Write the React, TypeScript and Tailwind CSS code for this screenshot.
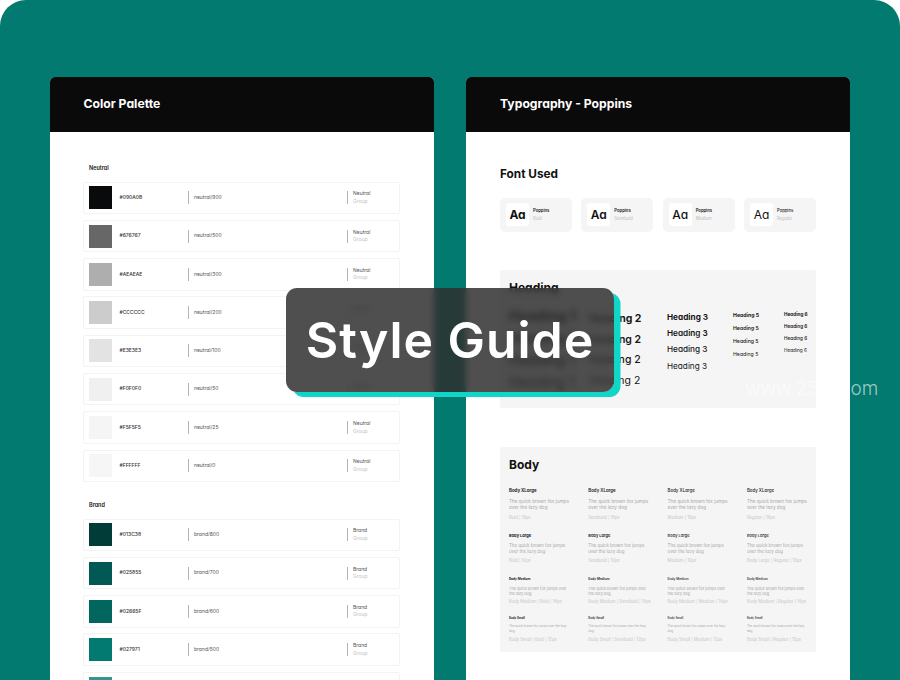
const neutral = [
  { hex: "#090A0B", name: "neutral/900", color: "#090a0b" },
  { hex: "#676767", name: "neutral/500", color: "#676767" },
  { hex: "#AEAEAE", name: "neutral/300", color: "#aeaeae" },
  { hex: "#CCCCCC", name: "neutral/200", color: "#cccccc" },
  { hex: "#E3E3E3", name: "neutral/100", color: "#e3e3e3" },
  { hex: "#F0F0F0", name: "neutral/50", color: "#f0f0f0" },
  { hex: "#F5F5F5", name: "neutral/25", color: "#f5f5f5" },
  { hex: "#FFFFFF", name: "neutral/0", color: "#f6f6f6" },
];

const brand = [
  { hex: "#013C38", name: "brand/800", color: "#013c38" },
  { hex: "#025855", name: "brand/700", color: "#025855" },
  { hex: "#02665F", name: "brand/600", color: "#02665f" },
  { hex: "#027971", name: "brand/500", color: "#027971" },
  { hex: "#359490", name: "brand/400", color: "#359490" },
];

const fonts = [
  { weight: "Bold", cls: "font-bold" },
  { weight: "Semibold", cls: "font-semibold" },
  { weight: "Medium", cls: "font-medium" },
  { weight: "Regular", cls: "font-normal" },
];

const weights = ["font-bold", "font-semibold", "font-medium", "font-normal"];

const bodyColumns = [
  { cls: "font-bold", metas: ["Bold | 18px", "Bold | 16px", "Body Medium | Bold | 14px", "Body Small | Bold | 12px"] },
  { cls: "font-semibold", metas: ["Semibold | 18px", "Semibold | 16px", "Body Medium | Semibold | 14px", "Body Small | Semibold | 12px"] },
  { cls: "font-medium", metas: ["Medium | 18px", "Medium | 16px", "Body Medium | Medium | 14px", "Body Small | Medium | 12px"] },
  { cls: "font-normal", metas: ["Regular | 18px", "Body Large | Regular | 16px", "Body Medium | Regular | 14px", "Body Small | Regular | 12px"] },
];

const Row = ({ hex, name, color, group }: { hex: string; name: string; color: string; group: string }) => (
  <div className="flex h-[32.5px] w-[317px] shrink-0 items-center rounded-[2px] border border-[#f3f3f3] pl-[4.5px] text-[5px] text-[#333333]">
    <div className="h-[23px] w-[23px] shrink-0" style={{ backgroundColor: color }} />
    <div className="w-[76px] shrink-0 pl-[8px] font-medium">{hex}</div>
    <div className="flex h-[13px] w-[159px] shrink-0 items-center border-l border-[#b5b5b5] pl-[5.5px] text-[#555555]">{name}</div>
    <div className="flex h-[13px] flex-col justify-center border-l border-[#b5b5b5] pl-[5.5px] leading-[7.5px]">
      <span className="text-[#555555]">{group}</span>
      <span className="text-[#c4c4c4]">Group</span>
    </div>
  </div>
);

const HeadingColumn = ({ label, size, width, top, gap }: { label: string; size: string; width: string; top: string; gap: string }) => (
  <div className={`flex shrink-0 flex-col ${width} ${top} ${gap}`}>
    {weights.map((w) => (
      <div key={w} className={`${size} ${w} leading-none text-[#151515]`}>
        {label}
      </div>
    ))}
  </div>
);

const BodyBlock = ({ title, titleCls, paraCls, meta, metaCls, weight, mb }: { title: string; titleCls: string; paraCls: string; meta: string; metaCls: string; weight: string; mb: string }) => (
  <div className={mb}>
    <div className={`${titleCls} ${weight} leading-none text-[#222222]`}>{title}</div>
    <div className={`${paraCls} text-[#a8a8a8]`}>The quick brown fox jumps over the lazy dog</div>
    <div className={`${metaCls} whitespace-nowrap text-[4.2px] leading-none text-[#c6c6c6]`}>{meta}</div>
  </div>
);

export default function App() {
  return (
    <div className="h-[680px] w-[900px] overflow-hidden bg-white font-['Inter',sans-serif] [font-feature-settings:'cv11']">
      <div className="relative h-[680px] rounded-t-[26px] bg-[#037a70] pl-[50px] pt-[77px]">
        <div className="flex gap-[32px]">
          <section className="h-[603px] w-[384px] shrink-0 overflow-hidden rounded-t-[5px] bg-white">
            <div className="flex h-[55px] items-center bg-[#0a0a0a] pl-[33.5px] text-[12.2px] font-bold text-white">Color Palette</div>
            <div className="flex flex-col pl-[33px] pt-[33px]">
              <div className="mb-[9.5px] pl-[6px] text-[5.5px] leading-[7px] font-semibold text-[#151515]">Neutral</div>
              <div className="flex flex-col gap-[5.8px]">
                {neutral.map((r) => (
                  <Row key={r.hex} {...r} group="Neutral" />
                ))}
              </div>
              <div className="mb-[9.5px] mt-[20px] pl-[6px] text-[5.5px] leading-[7px] font-semibold text-[#151515]">Brand</div>
              <div className="flex flex-col gap-[5.8px]">
                {brand.map((r) => (
                  <Row key={r.hex} {...r} group="Brand" />
                ))}
              </div>
            </div>
          </section>

          <section className="h-[603px] w-[384px] shrink-0 overflow-hidden rounded-t-[5px] bg-white">
            <div className="flex h-[55px] items-center bg-[#0a0a0a] pl-[34px] text-[12.2px] font-bold text-white">Typography - Poppins</div>
            <div className="px-[34px] pt-[35px]">
              <div className="text-[11.8px] leading-[15px] font-bold text-[#111111]">Font Used</div>
              <div className="mt-[15.5px] flex justify-between">
                {fonts.map((f) => (
                  <div key={f.weight} className="flex h-[34px] w-[72px] items-center gap-[4px] rounded-[5px] bg-[#f5f5f5] pl-[6px]">
                    <div className={`flex h-[23px] w-[23px] items-center justify-center rounded-[3px] bg-white text-[12px] text-[#111111] ${f.cls}`}>Aa</div>
                    <div className="flex flex-col text-[4.2px] leading-[8px]">
                      <span className={`text-[#1a1a1a] ${f.cls === "font-normal" ? "font-medium" : "font-semibold"}`}>Poppins</span>
                      <span className="text-[#bbbbbb]">{f.weight}</span>
                    </div>
                  </div>
                ))}
              </div>

              <div className="mt-[38.5px] h-[138px] rounded-[2px] bg-[#f5f5f5] pl-[9px] pt-[11px]">
                <div className="text-[12px] leading-[13px] font-bold text-[#111111]">Heading</div>
                <div className="flex">
                  <HeadingColumn label="Heading 1" size="text-[14px]" width="w-[80px]" top="mt-[15px]" gap="gap-[8px]" />
                  <HeadingColumn label="Heading 2" size="text-[10.5px]" width="w-[78px]" top="mt-[20px]" gap="gap-[10px]" />
                  <HeadingColumn label="Heading 3" size="text-[8.2px]" width="w-[66px]" top="mt-[19px]" gap="gap-[8px]" />
                  <HeadingColumn label="Heading 5" size="text-[5.2px]" width="w-[51px]" top="mt-[19px]" gap="gap-[7.9px]" />
                  <HeadingColumn label="Heading 6" size="text-[4.7px]" width="w-[30px]" top="mt-[18px]" gap="gap-[7.2px]" />
                </div>
              </div>

              <div className="mt-[39px] h-[205px] rounded-[2px] bg-[#f5f5f5] pl-[9px] pt-[10px]">
                <div className="text-[12px] leading-[16px] font-bold text-[#111111]">Body</div>
                <div className="mt-[16px] flex">
                  {bodyColumns.map((c) => {
                    const weight = c.cls === "font-normal" ? "font-medium" : c.cls;
                    return (
                      <div key={c.cls} className="w-[79.3px] shrink-0">
                        <BodyBlock title="Body XLarge" titleCls="text-[4.4px]" paraCls="mt-[4.5px] max-w-[64px] text-[4.7px] leading-[6.5px]" meta={c.metas[0]} metaCls="mt-[5.5px]" weight={weight} mb="mb-[13.5px]" />
                        <BodyBlock title="Body Large" titleCls="text-[4px]" paraCls="mt-[4.5px] max-w-[58px] text-[4.4px] leading-[6.5px]" meta={c.metas[1]} metaCls="mt-[3.5px]" weight={weight} mb="mb-[14.5px]" />
                        <BodyBlock title="Body Medium" titleCls="text-[3.2px]" paraCls="mt-[4.5px] max-w-[60px] text-[3.8px] leading-[5px]" meta={c.metas[2]} metaCls="mt-[4px]" weight={weight} mb="mb-[13.5px]" />
                        <BodyBlock title="Body Small" titleCls="text-[2.9px]" paraCls="mt-[3.5px] max-w-[62px] text-[3px] leading-[5px]" meta={c.metas[3]} metaCls="mt-[4px]" weight={weight} mb="" />
                      </div>
                    );
                  })}
                </div>
              </div>
            </div>
          </section>
        </div>

        <div className="absolute left-[745px] top-[377px] text-[19px] font-light leading-[23px] text-white/60">www.25xt.com</div>

        <div className="absolute left-[286px] top-[288px] flex h-[104px] w-[328px] items-center justify-center rounded-[11px] bg-[#2d2d2d]/[.84] shadow-[6.5px_5px_0_#0fd6c6] backdrop-blur-[3px]">
          <span className="text-[50px] font-semibold tracking-[0.95px] text-white">Style Guide</span>
        </div>
      </div>
    </div>
  );
}
